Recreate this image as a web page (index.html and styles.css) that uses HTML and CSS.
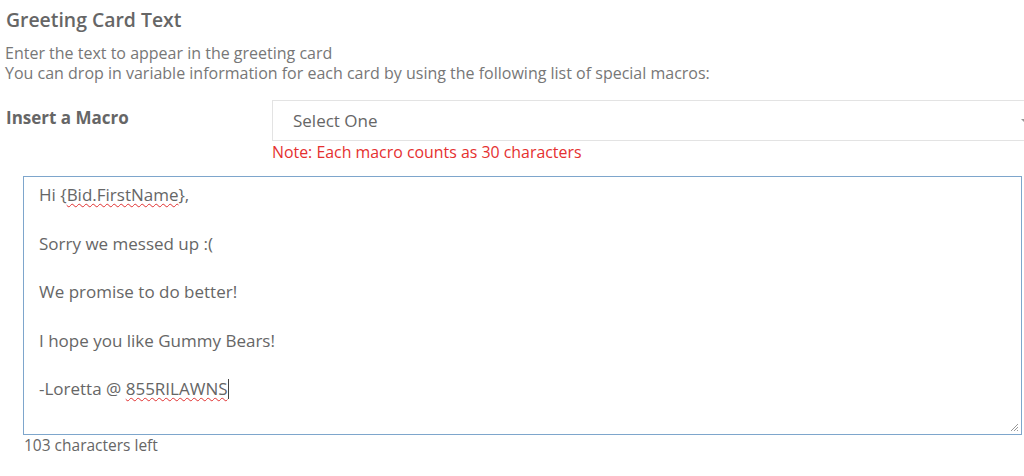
FILE: index.html
```html
<!DOCTYPE html>
<html>
<head>
<meta charset="utf-8">
<link rel="stylesheet" href="styles.css">
</head>
<body>
<div class="page">
  <h2 class="title">Greeting Card Text</h2>
  <p class="desc">Enter the text to appear in the greeting card<br>You can drop in variable information for each card by using the following list of special macros:</p>
  <div class="macro-row">
    <label class="macro-label">Insert a Macro</label>
    <div class="macro-field">
      <div class="select">
        <span>Select One</span>
        <span class="arrow"></span>
      </div>
      <div class="note">Note: Each macro counts as 30 characters</div>
    </div>
  </div>
  <div class="editor-wrap">
    <div class="editor">
      <div class="line">Hi {<span class="spell">Bid.FirstName</span>},</div>
      <div class="line">&nbsp;</div>
      <div class="line">Sorry we messed up :(</div>
      <div class="line">&nbsp;</div>
      <div class="line">We promise to do better!</div>
      <div class="line">&nbsp;</div>
      <div class="line">I hope you like Gummy Bears!</div>
      <div class="line">&nbsp;</div>
      <div class="line">-Loretta @ <span class="spell">855RILAWNS</span><span class="caret"></span></div>
      <svg class="grip" width="10" height="10" viewBox="0 0 10 10"><path d="M9 2 L2 9 M9 5 L5 9 M9 8 L8 9" stroke="#999" stroke-width="1"/></svg>
    </div>
    <div class="count">103 characters left</div>
  </div>
</div>
</body>
</html>
```
FILE: styles.css
```css
* { box-sizing: border-box; }
body {
  margin: 0;
  background: #fff;
  font-family: "Open Sans", "Noto Sans", sans-serif;
  color: #666;
  overflow: hidden;
}
.page {
  padding: 6px 0 0 5px;
  width: 1024px;
}
.title {
  margin: 0;
  font-size: 19.4px;
  font-weight: 600;
  line-height: 28px;
  color: #666;
  padding-left: 1px;
}
.desc {
  margin: 9px 0 0;
  font-size: 16px;
  line-height: 20px;
  color: #777;
}
.macro-row {
  display: flex;
  margin-top: 17px;
}
.macro-label {
  width: 267px;
  padding-left: 1px;
  padding-top: 6px;
  font-size: 17px;
  font-weight: 700;
  color: #666;
  line-height: 24px;
}
.macro-field {
  flex: 1;
  margin-right: -20px;
}
.select {
  height: 41px;
  border: 1px solid #e3e3e3;
  padding: 0 20px;
  display: flex;
  align-items: center;
  justify-content: space-between;
  font-size: 17px;
  color: #666;
}
.arrow {
  width: 0; height: 0;
  border-left: 4px solid transparent;
  border-right: 4px solid transparent;
  border-top: 4px solid #999;
  margin-right: -6px;
}
.note {
  font-size: 15.9px;
  line-height: 22px;
  color: #e53030;
}
.editor-wrap {
  padding-left: 18px;
  margin-top: 13px;
}
.editor {
  position: relative;
  width: 999px;
  height: 259px;
  border: 1px solid #7ea6cc;
  padding: 6px 15px;
  font-size: 17px;
  line-height: 24.3px;
  color: #666;
}
.spell {
  text-decoration: underline wavy #e03030;
  text-decoration-thickness: 1px;
  text-underline-offset: 2px;
}
.caret {
  display: inline-block;
  width: 1px;
  height: 20px;
  background: #444;
  vertical-align: -4px;
}
.grip {
  position: absolute;
  right: 2px;
  bottom: 2px;
}
.count {
  font-size: 15.5px;
  line-height: 20px;
  padding-left: 1px;
  color: #666;
}
```
